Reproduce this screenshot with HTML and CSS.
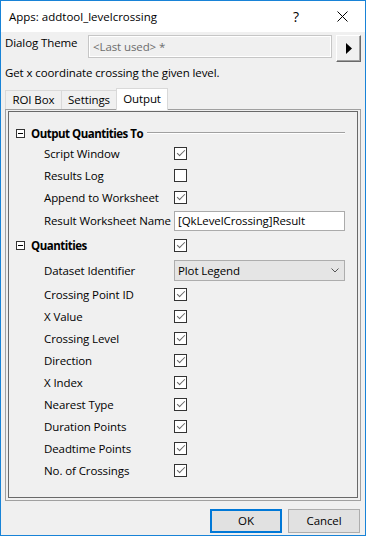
FILE: index.html
```html
<!DOCTYPE html>
<html>
<head>
<meta charset="utf-8">
<link rel="stylesheet" href="styles.css">
</head>
<body>
<div class="window">
  <div class="titlebar">
    <span class="title">Apps: addtool_levelcrossing</span>
    <span class="tbtn help">?</span>
    <span class="tbtn close"><svg width="11" height="11" viewBox="0 0 11 11"><path d="M0.5 0.5 L10.5 10.5 M10.5 0.5 L0.5 10.5" stroke="#000" stroke-width="1" fill="none"/></svg></span>
  </div>
  <div class="content">
    <div class="theme-row">
      <span class="theme-label">Dialog Theme</span>
      <div class="theme-input">&lt;Last used&gt; *</div>
      <div class="arrow-btn"><svg width="6" height="11" viewBox="0 0 6 11"><polygon points="0,0 6,5.5 0,11" fill="#000"/></svg></div>
    </div>
    <div class="desc">Get x coordinate crossing the given level.</div>
    <div class="tabs">
      <div class="tab t1">ROI Box</div>
      <div class="tab t2">Settings</div>
      <div class="tab t3 active">Output</div>
    </div>
    <div class="panel">
      <div class="panel-inner">
        <div class="row group h18">
          <span class="toggle"><svg width="9" height="9" viewBox="0 0 9 9"><rect x="0.5" y="0.5" width="8" height="8" fill="#fff" stroke="#333"/><path d="M2 4.5 H7" stroke="#000"/></svg></span>
          <span class="group-label">Output Quantities To</span>
          <span class="sep"></span>
        </div>
        <div class="row item"><span class="label">Script Window</span><span class="cb on"></span></div>
        <div class="row item"><span class="label">Results Log</span><span class="cb"></span></div>
        <div class="row item"><span class="label">Append to Worksheet</span><span class="cb on"></span></div>
        <div class="row item h25"><span class="label">Result Worksheet Name</span><div class="textbox">[QkLevelCrossing]Result</div></div>
        <div class="row group h24">
          <span class="toggle"><svg width="9" height="9" viewBox="0 0 9 9"><rect x="0.5" y="0.5" width="8" height="8" fill="#fff" stroke="#333"/><path d="M2 4.5 H7" stroke="#000"/></svg></span>
          <span class="group-label fixed">Quantities</span>
          <span class="cb on"></span>
        </div>
        <div class="row item h26"><span class="label">Dataset Identifier</span><div class="select"><span>Plot Legend</span><svg width="8" height="5" viewBox="0 0 8 5"><path d="M0.5 0.5 L4 4 L7.5 0.5" stroke="#555" fill="none"/></svg></div></div>
        <div class="row item"><span class="label">Crossing Point ID</span><span class="cb on"></span></div>
        <div class="row item"><span class="label">X Value</span><span class="cb on"></span></div>
        <div class="row item"><span class="label">Crossing Level</span><span class="cb on"></span></div>
        <div class="row item"><span class="label">Direction</span><span class="cb on"></span></div>
        <div class="row item"><span class="label">X Index</span><span class="cb on"></span></div>
        <div class="row item"><span class="label">Nearest Type</span><span class="cb on"></span></div>
        <div class="row item"><span class="label">Duration Points</span><span class="cb on"></span></div>
        <div class="row item"><span class="label">Deadtime Points</span><span class="cb on"></span></div>
        <div class="row item"><span class="label">No. of Crossings</span><span class="cb on"></span></div>
      </div>
    </div>
    <div class="buttons">
      <div class="btn ok">OK</div>
      <div class="btn">Cancel</div>
    </div>
  </div>
</div>
</body>
</html>
```

FILE: styles.css
```css
html, body {
  margin: 0;
  padding: 0;
  background: #f0f0f0;
}
body {
  font-family: "Open Sans", "Noto Sans", sans-serif;
  font-size: 11.5px;
  letter-spacing: -0.1px;
  color: #000;
  white-space: nowrap;
}
.window {
  width: 366px;
  height: 536px;
  box-sizing: border-box;
  border: 1px solid #1883d7;
  background: #f0f0f0;
  display: flex;
  flex-direction: column;
}
.titlebar {
  height: 31px;
  flex: none;
  background: #fff;
  display: flex;
  align-items: center;
}
.title {
  flex: 1;
  padding-left: 8px;
  line-height: 16px;
  letter-spacing: 0;
}
.tbtn {
  width: 46px;
  height: 31px;
  display: flex;
  align-items: center;
  justify-content: center;
}
.help {
  font-size: 14px;
}
.content {
  flex: 1;
  display: flex;
  flex-direction: column;
  padding: 3px 4px 2px 4px;
}
.theme-row {
  display: flex;
  height: 27px;
  align-items: flex-start;
}
.theme-label {
  width: 83px;
  line-height: 16px;
}
.theme-input {
  width: 244px;
  height: 23px;
  box-sizing: border-box;
  border: 1px solid #c6c6c6;
  box-shadow: inset 0 0 0 1px #fff;
  padding-left: 4px;
  color: #6d6d6d;
  line-height: 21px;
}
.arrow-btn {
  margin-left: 4px;
  width: 25px;
  height: 27px;
  box-sizing: border-box;
  border-top: 1px solid #fff;
  border-left: 1px solid #fff;
  border-right: 1px solid #696969;
  border-bottom: 1px solid #696969;
  box-shadow: inset -1px -1px 0 #a0a0a0;
  display: flex;
  align-items: center;
  justify-content: center;
}
.desc {
  margin-top: 3px;
  line-height: 16px;
}
.tabs {
  margin-top: 7px;
  height: 21px;
  display: flex;
  align-items: flex-end;
  position: relative;
  z-index: 1;
}
.tab {
  height: 19px;
  box-sizing: border-box;
  border-top: 1px solid #d9d9d9;
  border-left: 1px solid #d9d9d9;
  text-align: center;
  line-height: 18px;
  background: #f0f0f0;
}
.t1 { width: 56px; }
.t2 { width: 55px; }
.t3 {
  width: 52px;
  border-right: 1px solid #d9d9d9;
}
.tab.active {
  height: 22px;
  margin-bottom: -1px;
  background: #fff;
  line-height: 20px;
}
.panel {
  height: 392px;
  box-sizing: border-box;
  border: 1px solid #a0a0a0;
  padding: 1px 2px 2px 2px;
  display: flex;
}
.panel-inner {
  flex: 1;
  border: 1px solid #696969;
  padding-top: 12px;
}
.row {
  display: flex;
  align-items: center;
  height: 22px;
}
.row.h18 { height: 18px; }
.row.h24 { height: 24px; }
.row.h25 { height: 25px; }
.row.h26 { height: 26px; }
.group .toggle {
  margin-left: 7px;
  width: 9px;
  height: 9px;
  display: flex;
}
.group-label {
  margin-left: 6px;
  font-weight: bold;
  letter-spacing: -0.5px;
}
.group-label.fixed {
  width: 143px;
}
.sep {
  flex: 1;
  margin-left: 4px;
  margin-right: 12px;
  border-top: 1px solid #a0a0a0;
  border-bottom: 1px solid #fff;
}
.item {
  padding-left: 35px;
}
.label {
  width: 130px;
}
.cb {
  width: 13px;
  height: 13px;
  box-sizing: border-box;
  border: 1px solid #333;
  background: #fff;
  position: relative;
}
.cb.on::after {
  content: "";
  position: absolute;
  left: 2px;
  top: 1px;
  width: 7px;
  height: 3px;
  border-left: 1px solid #666;
  border-bottom: 1px solid #666;
  transform: translate(0, 1px) rotate(-45deg);
  transform-origin: 50% 50%;
}
.textbox {
  width: 171px;
  height: 20px;
  box-sizing: border-box;
  border: 1px solid #ababab;
  background: #fff;
  padding-left: 3px;
  line-height: 18px;
}
.select {
  width: 171px;
  height: 21px;
  box-sizing: border-box;
  border: 1px solid #adadad;
  background: #e5e5e5;
  padding: 0 5px 0 3px;
  display: flex;
  align-items: center;
  justify-content: space-between;
}
.buttons {
  margin-top: 8px;
  display: flex;
  justify-content: flex-end;
  gap: 6px;
  padding-right: 1px;
}
.btn {
  width: 72px;
  height: 24px;
  box-sizing: border-box;
  border: 1px solid #adadad;
  background: #e1e1e1;
  text-align: center;
  line-height: 22px;
}
.btn.ok {
  border: 2px solid #0078d7;
  line-height: 20px;
}
```
